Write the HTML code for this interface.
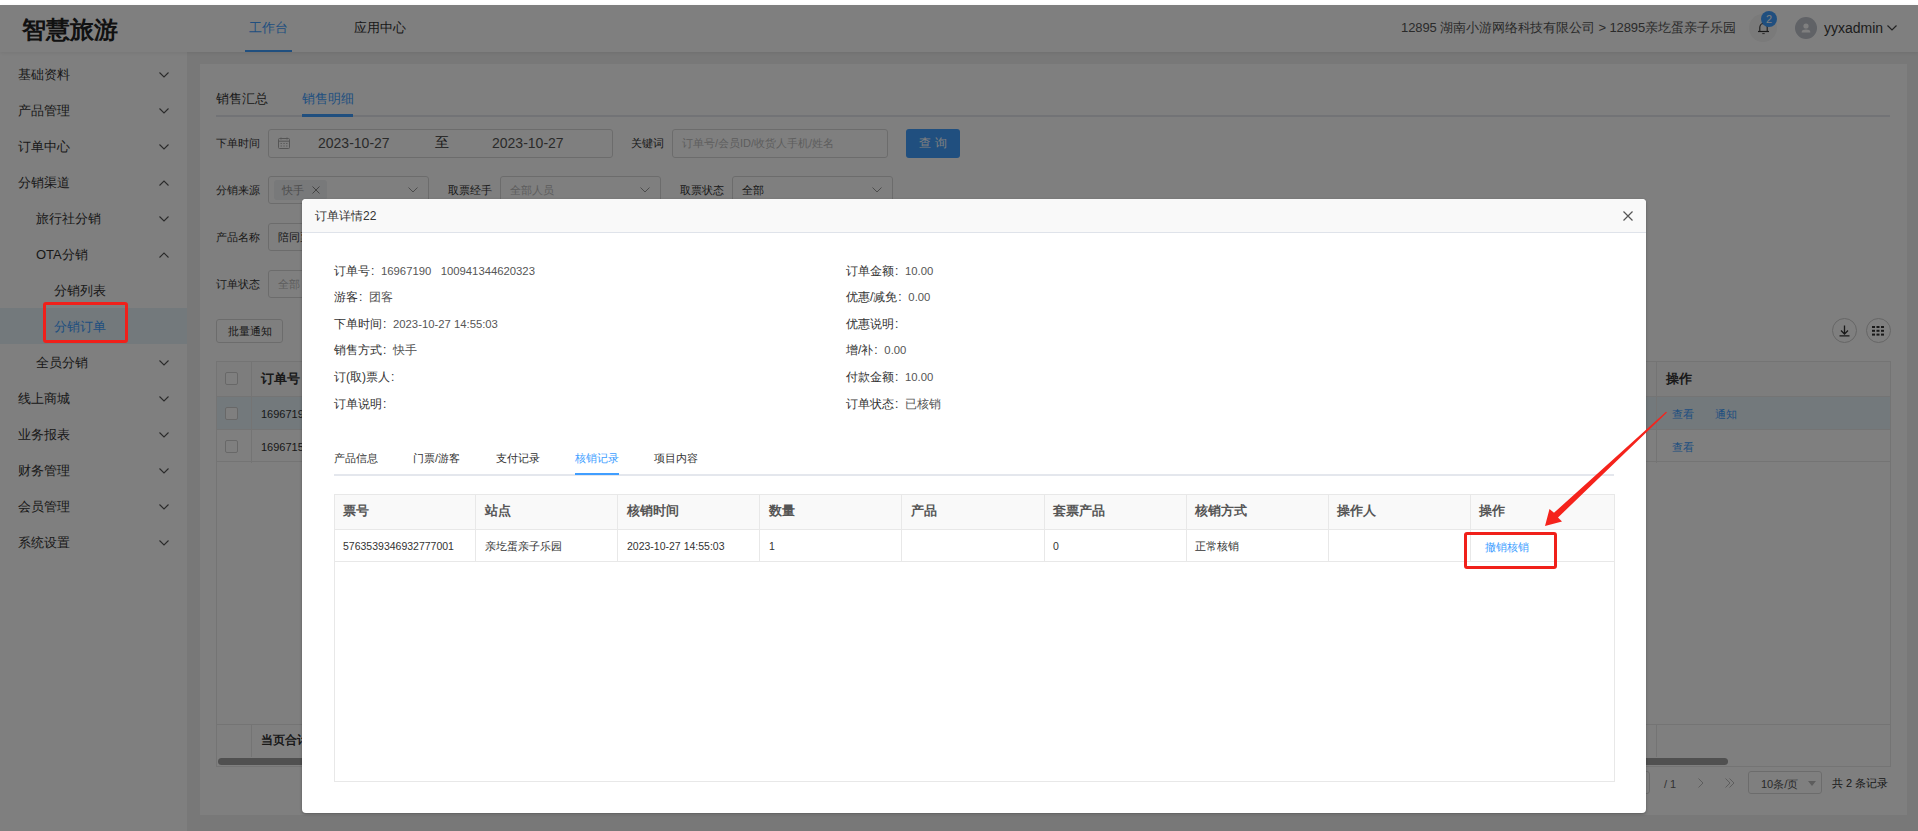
<!DOCTYPE html>
<html><head><meta charset="utf-8">
<style>
*{box-sizing:border-box;margin:0;padding:0}
html,body{width:1918px;height:831px;overflow:hidden;background:#fff;font-family:"Liberation Sans",sans-serif;color:#333;font-size:13px}
.a{position:absolute;white-space:nowrap}
#page{position:absolute;z-index:0;left:0;top:5px;width:1918px;height:826px;background:#f0f0f0}
#hdr{position:absolute;left:0;top:0;width:1918px;height:47px;background:#fff;z-index:2;box-shadow:0 1px 4px rgba(0,0,0,.08)}
#side{position:absolute;left:0;top:47px;width:187px;height:779px;background:#fff}
.mi{position:absolute;left:18px;height:36px;line-height:36px;margin-top:1px;font-size:13px;color:#444}
.chev{position:absolute;left:159px;width:10px;height:6px;margin-top:1px}
#card{position:absolute;left:200px;top:59px;width:1707px;height:751px;background:#fff}
.lbl{position:absolute;font-size:11px;color:#333;line-height:14px}
.box{position:absolute;border:1px solid #d9d9d9;border-radius:3px;background:#fff}
.ph{color:#bbb}
#ov{position:absolute;z-index:1;left:0;top:5px;width:1918px;height:826px;background:rgba(0,0,0,.5)}
#modal{position:absolute;z-index:2;left:302px;top:199px;width:1344px;height:614px;background:#fff;border-radius:4px;overflow:hidden;box-shadow:0 1px 3px rgba(0,0,0,.3)}
#mh{position:absolute;left:0;top:0;width:1344px;height:34px;background:#f9f9f9;border-bottom:1px solid #dfe3ea}
.inf{position:absolute;font-size:12px;color:#333;line-height:16px}
.mt{position:absolute;font-size:11px;color:#333;line-height:16px}
</style></head><body>
<div id="page">
  <div id="hdr">
    <div class="a" style="left:22px;top:10px;font-size:24px;font-weight:bold;color:#222;line-height:30px">智慧旅游</div>
    <div class="a" style="left:249px;top:14px;font-size:13px;color:#409EFF;line-height:18px">工作台</div>
    <div class="a" style="left:245px;top:45px;width:47px;height:2px;background:#409EFF"></div>
    <div class="a" style="left:354px;top:14px;font-size:13px;color:#333;line-height:18px">应用中心</div>
    <div class="a" style="left:1401px;top:14px;font-size:13px;color:#555;line-height:18px;letter-spacing:-0.1px">12895 湖南小游网络科技有限公司 &gt; 12895亲圪蛋亲子乐园</div><div class="a" style="left:1749px;top:9px;width:28px;height:28px;border-radius:50%;background:#f4f4f4"></div>
<svg class="a" style="left:1757px;top:16px" width="13" height="14" viewBox="0 0 13 14"><path d="M2.8 10.5V6.5C2.8 4 4.5 2.5 6.5 2.5S10.2 4 10.2 6.5V10.5" fill="none" stroke="#333" stroke-width="1.1"/><path d="M1 10.5H12" stroke="#333" stroke-width="1.2"/><path d="M5.3 12.6H7.7" stroke="#555" stroke-width="1"/></svg>
<div class="a" style="left:1761px;top:6px;width:16px;height:16px;border-radius:50%;background:#409EFF;color:#fff;font-size:11px;line-height:16px;text-align:center">2</div>
<div class="a" style="left:1795px;top:12px;width:22px;height:22px;border-radius:50%;background:#c0c4cc"></div>
<svg class="a" style="left:1799px;top:16px" width="14" height="14" viewBox="0 0 14 14"><circle cx="7" cy="5" r="2.6" fill="#fff"/><path d="M2.6 11.5C2.6 9 4.6 8.4 7 8.4S11.4 9 11.4 11.5Z" fill="#fff"/></svg>
<div class="a" style="left:1824px;top:14px;font-size:14px;color:#3a3a3a;line-height:18px">yyxadmin</div>
<svg class="a" style="left:1887px;top:20px" width="10" height="6" viewBox="0 0 10 6"><path d="M0.5 0.5L5 5L9.5 0.5" fill="none" stroke="#444" stroke-width="1.2"/></svg>

  </div>
  <div id="side"><div class="a" style="left:0;top:256px;width:187px;height:36px;background:#e6f2f9"></div><div class="mi" style="left:18px;top:4px;color:#333">基础资料</div><svg class="chev" style="top:19px" viewBox="0 0 10 6"><path d="M0.5 0.5 L5 5 L9.5 0.5" fill="none" stroke="#555" stroke-width="1.1"/></svg><div class="mi" style="left:18px;top:40px;color:#333">产品管理</div><svg class="chev" style="top:55px" viewBox="0 0 10 6"><path d="M0.5 0.5 L5 5 L9.5 0.5" fill="none" stroke="#555" stroke-width="1.1"/></svg><div class="mi" style="left:18px;top:76px;color:#333">订单中心</div><svg class="chev" style="top:91px" viewBox="0 0 10 6"><path d="M0.5 0.5 L5 5 L9.5 0.5" fill="none" stroke="#555" stroke-width="1.1"/></svg><div class="mi" style="left:18px;top:112px;color:#333">分销渠道</div><svg class="chev" style="top:127px" viewBox="0 0 10 6"><path d="M0.5 5.5 L5 1 L9.5 5.5" fill="none" stroke="#555" stroke-width="1.1"/></svg><div class="mi" style="left:36px;top:148px;color:#333">旅行社分销</div><svg class="chev" style="top:163px" viewBox="0 0 10 6"><path d="M0.5 0.5 L5 5 L9.5 0.5" fill="none" stroke="#555" stroke-width="1.1"/></svg><div class="mi" style="left:36px;top:184px;color:#333">OTA分销</div><svg class="chev" style="top:199px" viewBox="0 0 10 6"><path d="M0.5 5.5 L5 1 L9.5 5.5" fill="none" stroke="#555" stroke-width="1.1"/></svg><div class="mi" style="left:54px;top:220px;color:#333">分销列表</div><div class="mi" style="left:54px;top:256px;color:#409EFF">分销订单</div><div class="mi" style="left:36px;top:292px;color:#333">全员分销</div><svg class="chev" style="top:307px" viewBox="0 0 10 6"><path d="M0.5 0.5 L5 5 L9.5 0.5" fill="none" stroke="#555" stroke-width="1.1"/></svg><div class="mi" style="left:18px;top:328px;color:#333">线上商城</div><svg class="chev" style="top:343px" viewBox="0 0 10 6"><path d="M0.5 0.5 L5 5 L9.5 0.5" fill="none" stroke="#555" stroke-width="1.1"/></svg><div class="mi" style="left:18px;top:364px;color:#333">业务报表</div><svg class="chev" style="top:379px" viewBox="0 0 10 6"><path d="M0.5 0.5 L5 5 L9.5 0.5" fill="none" stroke="#555" stroke-width="1.1"/></svg><div class="mi" style="left:18px;top:400px;color:#333">财务管理</div><svg class="chev" style="top:415px" viewBox="0 0 10 6"><path d="M0.5 0.5 L5 5 L9.5 0.5" fill="none" stroke="#555" stroke-width="1.1"/></svg><div class="mi" style="left:18px;top:436px;color:#333">会员管理</div><svg class="chev" style="top:451px" viewBox="0 0 10 6"><path d="M0.5 0.5 L5 5 L9.5 0.5" fill="none" stroke="#555" stroke-width="1.1"/></svg><div class="mi" style="left:18px;top:472px;color:#333">系统设置</div><svg class="chev" style="top:487px" viewBox="0 0 10 6"><path d="M0.5 0.5 L5 5 L9.5 0.5" fill="none" stroke="#555" stroke-width="1.1"/></svg></div>
  <div id="card"><div class="a" style="left:16px;top:26px;font-size:13px;color:#333;line-height:18px">销售汇总</div><div class="a" style="left:102px;top:26px;font-size:13px;color:#409EFF;line-height:18px">销售明细</div><div class="a" style="left:16px;top:51px;width:1674px;height:2px;background:#e4e7ed"></div><div class="a" style="left:102px;top:50px;width:51px;height:3px;background:#409EFF"></div><div class="lbl a" style="left:16px;top:72px">下单时间</div><div class="box" style="left:68px;top:65px;width:345px;height:29px"></div><svg class="a" style="left:78px;top:73px" width="12" height="12" viewBox="0 0 12 12"><rect x="0.5" y="1.5" width="11" height="10" rx="1" fill="none" stroke="#aaa"/><path d="M0.5 4.2H11.5" stroke="#aaa"/><path d="M3 0.5V2.5M9 0.5V2.5" stroke="#aaa"/><path d="M2.5 6.5h1.5M5.3 6.5h1.5M8 6.5h1.5M2.5 9h1.5M5.3 9h1.5M8 9h1.5" stroke="#bbb"/></svg><div class="a" style="left:118px;top:71px;font-size:14px;color:#555;line-height:17px">2023-10-27</div><div class="a" style="left:235px;top:70px;font-size:14px;color:#333;line-height:17px">至</div><div class="a" style="left:292px;top:71px;font-size:14px;color:#555;line-height:17px">2023-10-27</div><div class="lbl a" style="left:431px;top:72px">关键词</div><div class="box" style="left:472px;top:65px;width:216px;height:29px"></div><div class="a" style="left:482px;top:72px;font-size:11px;color:#bbb;line-height:14px">订单号/会员ID/收货人手机/姓名</div><div class="a" style="left:706px;top:65px;width:54px;height:29px;background:#409EFF;border-radius:3px;color:#fff;font-size:12px;line-height:29px;text-align:center">查 询</div><div class="lbl a" style="left:16px;top:119px">分销来源</div><div class="box" style="left:68px;top:112px;width:161px;height:28px"></div><div class="a" style="left:74px;top:116px;width:53px;height:20px;background:#f0f2f5;border-radius:3px"></div><div class="a" style="left:82px;top:119px;font-size:11px;color:#999;line-height:14px">快手</div><svg class="a" style="left:112px;top:122px" width="8" height="8" viewBox="0 0 8 8"><path d="M0.5 0.5L7.5 7.5M7.5 0.5L0.5 7.5" stroke="#888" stroke-width="1"/></svg><svg class="a" style="left:208px;top:123px" width="10" height="6" viewBox="0 0 10 6"><path d="M0.5 0.5 L5 5 L9.5 0.5" fill="none" stroke="#999" stroke-width="1"/></svg><div class="lbl a" style="left:248px;top:119px">取票经手</div><div class="box" style="left:300px;top:112px;width:161px;height:28px"></div><div class="a" style="left:310px;top:119px;font-size:11px;color:#bbb;line-height:14px">全部人员</div><svg class="a" style="left:440px;top:123px" width="10" height="6" viewBox="0 0 10 6"><path d="M0.5 0.5 L5 5 L9.5 0.5" fill="none" stroke="#999" stroke-width="1"/></svg><div class="lbl a" style="left:480px;top:119px">取票状态</div><div class="box" style="left:532px;top:112px;width:161px;height:28px"></div><div class="a" style="left:542px;top:119px;font-size:11px;color:#333;line-height:14px">全部</div><svg class="a" style="left:672px;top:123px" width="10" height="6" viewBox="0 0 10 6"><path d="M0.5 0.5 L5 5 L9.5 0.5" fill="none" stroke="#999" stroke-width="1"/></svg><div class="lbl a" style="left:16px;top:166px">产品名称</div><div class="box" style="left:68px;top:159px;width:161px;height:28px"></div><div class="a" style="left:78px;top:166px;font-size:11px;color:#333;line-height:14px">陪同票</div><div class="lbl a" style="left:16px;top:213px">订单状态</div><div class="box" style="left:68px;top:206px;width:161px;height:28px"></div><div class="a" style="left:78px;top:213px;font-size:11px;color:#bbb;line-height:14px">全部</div><div class="box" style="left:16px;top:255px;width:67px;height:24px;font-size:11px;color:#333;line-height:22px;text-align:center">批量通知</div><div class="a" style="left:1632px;top:254px;width:25px;height:25px;border:1px solid #ccc;border-radius:50%"></div><svg class="a" style="left:1638px;top:260px" width="13" height="13" viewBox="0 0 13 13"><path d="M6.5 1.5V10M3 6.5L6.5 10L10 6.5M1.5 11.8H11.5" fill="none" stroke="#333" stroke-width="1.3"/></svg><div class="a" style="left:1666px;top:254px;width:25px;height:25px;border:1px solid #ccc;border-radius:50%"></div><svg class="a" style="left:1672px;top:262px" width="12" height="10" viewBox="0 0 12 10"><g fill="#333"><rect x="0" y="0" width="3" height="2"/><rect x="4.5" y="0" width="3" height="2"/><rect x="9" y="0" width="3" height="2"/><rect x="0" y="3.8" width="3" height="2"/><rect x="4.5" y="3.8" width="3" height="2"/><rect x="9" y="3.8" width="3" height="2"/><rect x="0" y="7.6" width="3" height="2"/><rect x="4.5" y="7.6" width="3" height="2"/><rect x="9" y="7.6" width="3" height="2"/></g></svg><div class="a" style="left:16px;top:297px;width:1675px;height:406px;border:1px solid #e8e8e8"></div><div class="a" style="left:17px;top:298px;width:1673px;height:35px;background:#fafafa;border-bottom:1px solid #e8e8e8"></div><div class="a" style="left:17px;top:333px;width:1673px;height:33px;background:#e6f2f9;border-bottom:1px solid #e8e8e8"></div><div class="a" style="left:17px;top:366px;width:1673px;height:32px;border-bottom:1px solid #e8e8e8"></div><div class="a" style="left:51px;top:298px;width:1px;height:35px;background:#e8e8e8"></div><div class="a" style="left:1456px;top:298px;width:1px;height:35px;background:#e8e8e8"></div><div class="a" style="left:51px;top:333px;width:1px;height:33px;background:#e8e8e8"></div><div class="a" style="left:1456px;top:333px;width:1px;height:33px;background:#e8e8e8"></div><div class="a" style="left:51px;top:366px;width:1px;height:33px;background:#e8e8e8"></div><div class="a" style="left:1456px;top:366px;width:1px;height:33px;background:#e8e8e8"></div><div class="a" style="left:25px;top:308px;width:13px;height:13px;border:1px solid #d0d0d0;border-radius:2px;background:#fff"></div><div class="a" style="left:25px;top:343px;width:13px;height:13px;border:1px solid #d0d0d0;border-radius:2px;background:#fff"></div><div class="a" style="left:25px;top:376px;width:13px;height:13px;border:1px solid #d0d0d0;border-radius:2px;background:#fff"></div><div class="a" style="left:61px;top:306px;font-size:13px;font-weight:bold;color:#333;line-height:18px">订单号</div><div class="a" style="left:61px;top:343px;font-size:11px;color:#333;line-height:14px">1696719</div><div class="a" style="left:61px;top:376px;font-size:11px;color:#333;line-height:14px">1696715</div><div class="a" style="left:1466px;top:306px;font-size:13px;font-weight:bold;color:#333;line-height:18px">操作</div><div class="a" style="left:1472px;top:343px;font-size:11px;color:#409EFF;line-height:14px">查看</div><div class="a" style="left:1515px;top:343px;font-size:11px;color:#409EFF;line-height:14px">通知</div><div class="a" style="left:1472px;top:376px;font-size:11px;color:#409EFF;line-height:14px">查看</div><div class="a" style="left:17px;top:660px;width:1673px;height:1px;background:#e8e8e8"></div><div class="a" style="left:51px;top:661px;width:1px;height:32px;background:#e8e8e8"></div><div class="a" style="left:1456px;top:661px;width:1px;height:32px;background:#e8e8e8"></div><div class="a" style="left:61px;top:668px;font-size:12px;font-weight:bold;color:#333;line-height:16px">当页合计</div><div class="a" style="left:18px;top:694px;width:1510px;height:7px;background:#a0a0a0;border-radius:4px"></div><div class="box" style="left:1400px;top:707px;width:50px;height:23px"></div><div class="a" style="left:1464px;top:713px;font-size:11px;color:#666;line-height:14px">/ 1</div><svg class="a" style="left:1498px;top:714px" width="6" height="10" viewBox="0 0 6 10"><path d="M0.5 0.5L5 5L0.5 9.5" fill="none" stroke="#bbb"/></svg><svg class="a" style="left:1525px;top:714px" width="10" height="10" viewBox="0 0 10 10"><path d="M0.5 0.5L5 5L0.5 9.5M4.5 0.5L9 5L4.5 9.5" fill="none" stroke="#bbb"/></svg><div class="box" style="left:1548px;top:707px;width:74px;height:23px"></div><div class="a" style="left:1561px;top:713px;font-size:11px;color:#555;line-height:14px">10条/页</div><svg class="a" style="left:1608px;top:717px" width="8" height="5" viewBox="0 0 8 5"><path d="M0 0H8L4 5Z" fill="#bbb"/></svg><div class="a" style="left:1632px;top:712px;font-size:11px;color:#333;line-height:14px">共 2 条记录</div></div>
</div>
<div id="ov"></div>
<div id="modal">
  <div id="mh">
    <div class="a" style="left:13px;top:9px;font-size:12px;color:#333;line-height:16px">订单详情22</div>
  </div><svg class="a" style="left:1321px;top:12px" width="10" height="10" viewBox="0 0 10 10"><path d="M0.5 0.5L9.5 9.5M9.5 0.5L0.5 9.5" stroke="#555" stroke-width="1.2"/></svg><div class="inf a" style="left:32px;top:64px">订单号<i style="font-style:normal;display:inline-block;width:11px;padding-left:1px">:</i><span style="color:#555;font-size:11.3px">16967190&nbsp;&nbsp;&nbsp;100941344620323</span></div><div class="inf a" style="left:32px;top:90px">游客<i style="font-style:normal;display:inline-block;width:11px;padding-left:1px">:</i><span style="color:#555;font-size:12px">团客</span></div><div class="inf a" style="left:32px;top:117px">下单时间<i style="font-style:normal;display:inline-block;width:11px;padding-left:1px">:</i><span style="color:#555;font-size:11.3px">2023-10-27 14:55:03</span></div><div class="inf a" style="left:32px;top:143px">销售方式<i style="font-style:normal;display:inline-block;width:11px;padding-left:1px">:</i><span style="color:#555;font-size:12px">快手</span></div><div class="inf a" style="left:32px;top:170px">订(取)票人<i style="font-style:normal;display:inline-block;width:11px;padding-left:1px">:</i><span style="color:#555;font-size:12px"></span></div><div class="inf a" style="left:32px;top:197px">订单说明<i style="font-style:normal;display:inline-block;width:11px;padding-left:1px">:</i><span style="color:#555;font-size:12px"></span></div><div class="inf a" style="left:544px;top:64px">订单金额<i style="font-style:normal;display:inline-block;width:11px;padding-left:1px">:</i><span style="color:#555;font-size:11.3px">10.00</span></div><div class="inf a" style="left:544px;top:90px">优惠/减免<i style="font-style:normal;display:inline-block;width:11px;padding-left:1px">:</i><span style="color:#555;font-size:11.3px">0.00</span></div><div class="inf a" style="left:544px;top:117px">优惠说明<i style="font-style:normal;display:inline-block;width:11px;padding-left:1px">:</i><span style="color:#555;font-size:12px"></span></div><div class="inf a" style="left:544px;top:143px">增/补<i style="font-style:normal;display:inline-block;width:11px;padding-left:1px">:</i><span style="color:#555;font-size:11.3px">0.00</span></div><div class="inf a" style="left:544px;top:170px">付款金额<i style="font-style:normal;display:inline-block;width:11px;padding-left:1px">:</i><span style="color:#555;font-size:11.3px">10.00</span></div><div class="inf a" style="left:544px;top:197px">订单状态<i style="font-style:normal;display:inline-block;width:11px;padding-left:1px">:</i><span style="color:#555;font-size:12px">已核销</span></div><div class="mt a" style="left:32px;top:251px;color:#333">产品信息</div><div class="mt a" style="left:111px;top:251px;color:#333">门票/游客</div><div class="mt a" style="left:194px;top:251px;color:#333">支付记录</div><div class="mt a" style="left:273px;top:251px;color:#409EFF">核销记录</div><div class="mt a" style="left:352px;top:251px;color:#333">项目内容</div><div class="a" style="left:32px;top:275px;width:1280px;height:2px;background:#e4e7ed"></div><div class="a" style="left:273px;top:274px;width:44px;height:2px;background:#409EFF"></div><div class="a" style="left:32px;top:295px;width:1281px;height:288px;border:1px solid #e8e8e8"></div><div class="a" style="left:33px;top:296px;width:1279px;height:35px;background:#f9f9f9;border-bottom:1px solid #e8e8e8"></div><div class="a" style="left:33px;top:331px;width:1279px;height:32px;border-bottom:1px solid #e8e8e8"></div><div class="a" style="left:41px;top:303px;font-size:13px;font-weight:bold;color:#555;line-height:18px">票号</div><div class="a" style="left:41px;top:340px;font-size:10.5px;color:#333;line-height:14px">5763539346932777001</div><div class="a" style="left:173px;top:296px;width:1px;height:66px;background:#e8e8e8"></div><div class="a" style="left:183px;top:303px;font-size:13px;font-weight:bold;color:#555;line-height:18px">站点</div><div class="a" style="left:183px;top:340px;font-size:11px;color:#333;line-height:14px">亲圪蛋亲子乐园</div><div class="a" style="left:315px;top:296px;width:1px;height:66px;background:#e8e8e8"></div><div class="a" style="left:325px;top:303px;font-size:13px;font-weight:bold;color:#555;line-height:18px">核销时间</div><div class="a" style="left:325px;top:340px;font-size:10.5px;color:#333;line-height:14px">2023-10-27 14:55:03</div><div class="a" style="left:457px;top:296px;width:1px;height:66px;background:#e8e8e8"></div><div class="a" style="left:467px;top:303px;font-size:13px;font-weight:bold;color:#555;line-height:18px">数量</div><div class="a" style="left:467px;top:340px;font-size:10.5px;color:#333;line-height:14px">1</div><div class="a" style="left:599px;top:296px;width:1px;height:66px;background:#e8e8e8"></div><div class="a" style="left:609px;top:303px;font-size:13px;font-weight:bold;color:#555;line-height:18px">产品</div><div class="a" style="left:742px;top:296px;width:1px;height:66px;background:#e8e8e8"></div><div class="a" style="left:751px;top:303px;font-size:13px;font-weight:bold;color:#555;line-height:18px">套票产品</div><div class="a" style="left:751px;top:340px;font-size:10.5px;color:#333;line-height:14px">0</div><div class="a" style="left:884px;top:296px;width:1px;height:66px;background:#e8e8e8"></div><div class="a" style="left:893px;top:303px;font-size:13px;font-weight:bold;color:#555;line-height:18px">核销方式</div><div class="a" style="left:893px;top:340px;font-size:11px;color:#333;line-height:14px">正常核销</div><div class="a" style="left:1026px;top:296px;width:1px;height:66px;background:#e8e8e8"></div><div class="a" style="left:1035px;top:303px;font-size:13px;font-weight:bold;color:#555;line-height:18px">操作人</div><div class="a" style="left:1168px;top:296px;width:1px;height:66px;background:#e8e8e8"></div><div class="a" style="left:1177px;top:303px;font-size:13px;font-weight:bold;color:#555;line-height:18px">操作</div><div class="a" style="left:1183px;top:341px;font-size:11px;color:#409EFF;line-height:14px">撤销核销</div>
</div>
<div class="a" style="z-index:3;left:43px;top:302px;width:85px;height:41px;border:3px solid #f0201a;border-radius:3px"></div>
<div class="a" style="z-index:3;left:1464px;top:532px;width:93px;height:37px;border:3px solid #f0201a;border-radius:3px"></div>
<svg class="a" style="left:0;top:0;z-index:3" width="1918" height="831" viewBox="0 0 1918 831"><polygon points="1667,412.5 1558,517.5 1562,521.5 1545,526 1549.5,509 1554,512.8 1666,411.8" fill="#f5231c"/></svg>
</body></html>
